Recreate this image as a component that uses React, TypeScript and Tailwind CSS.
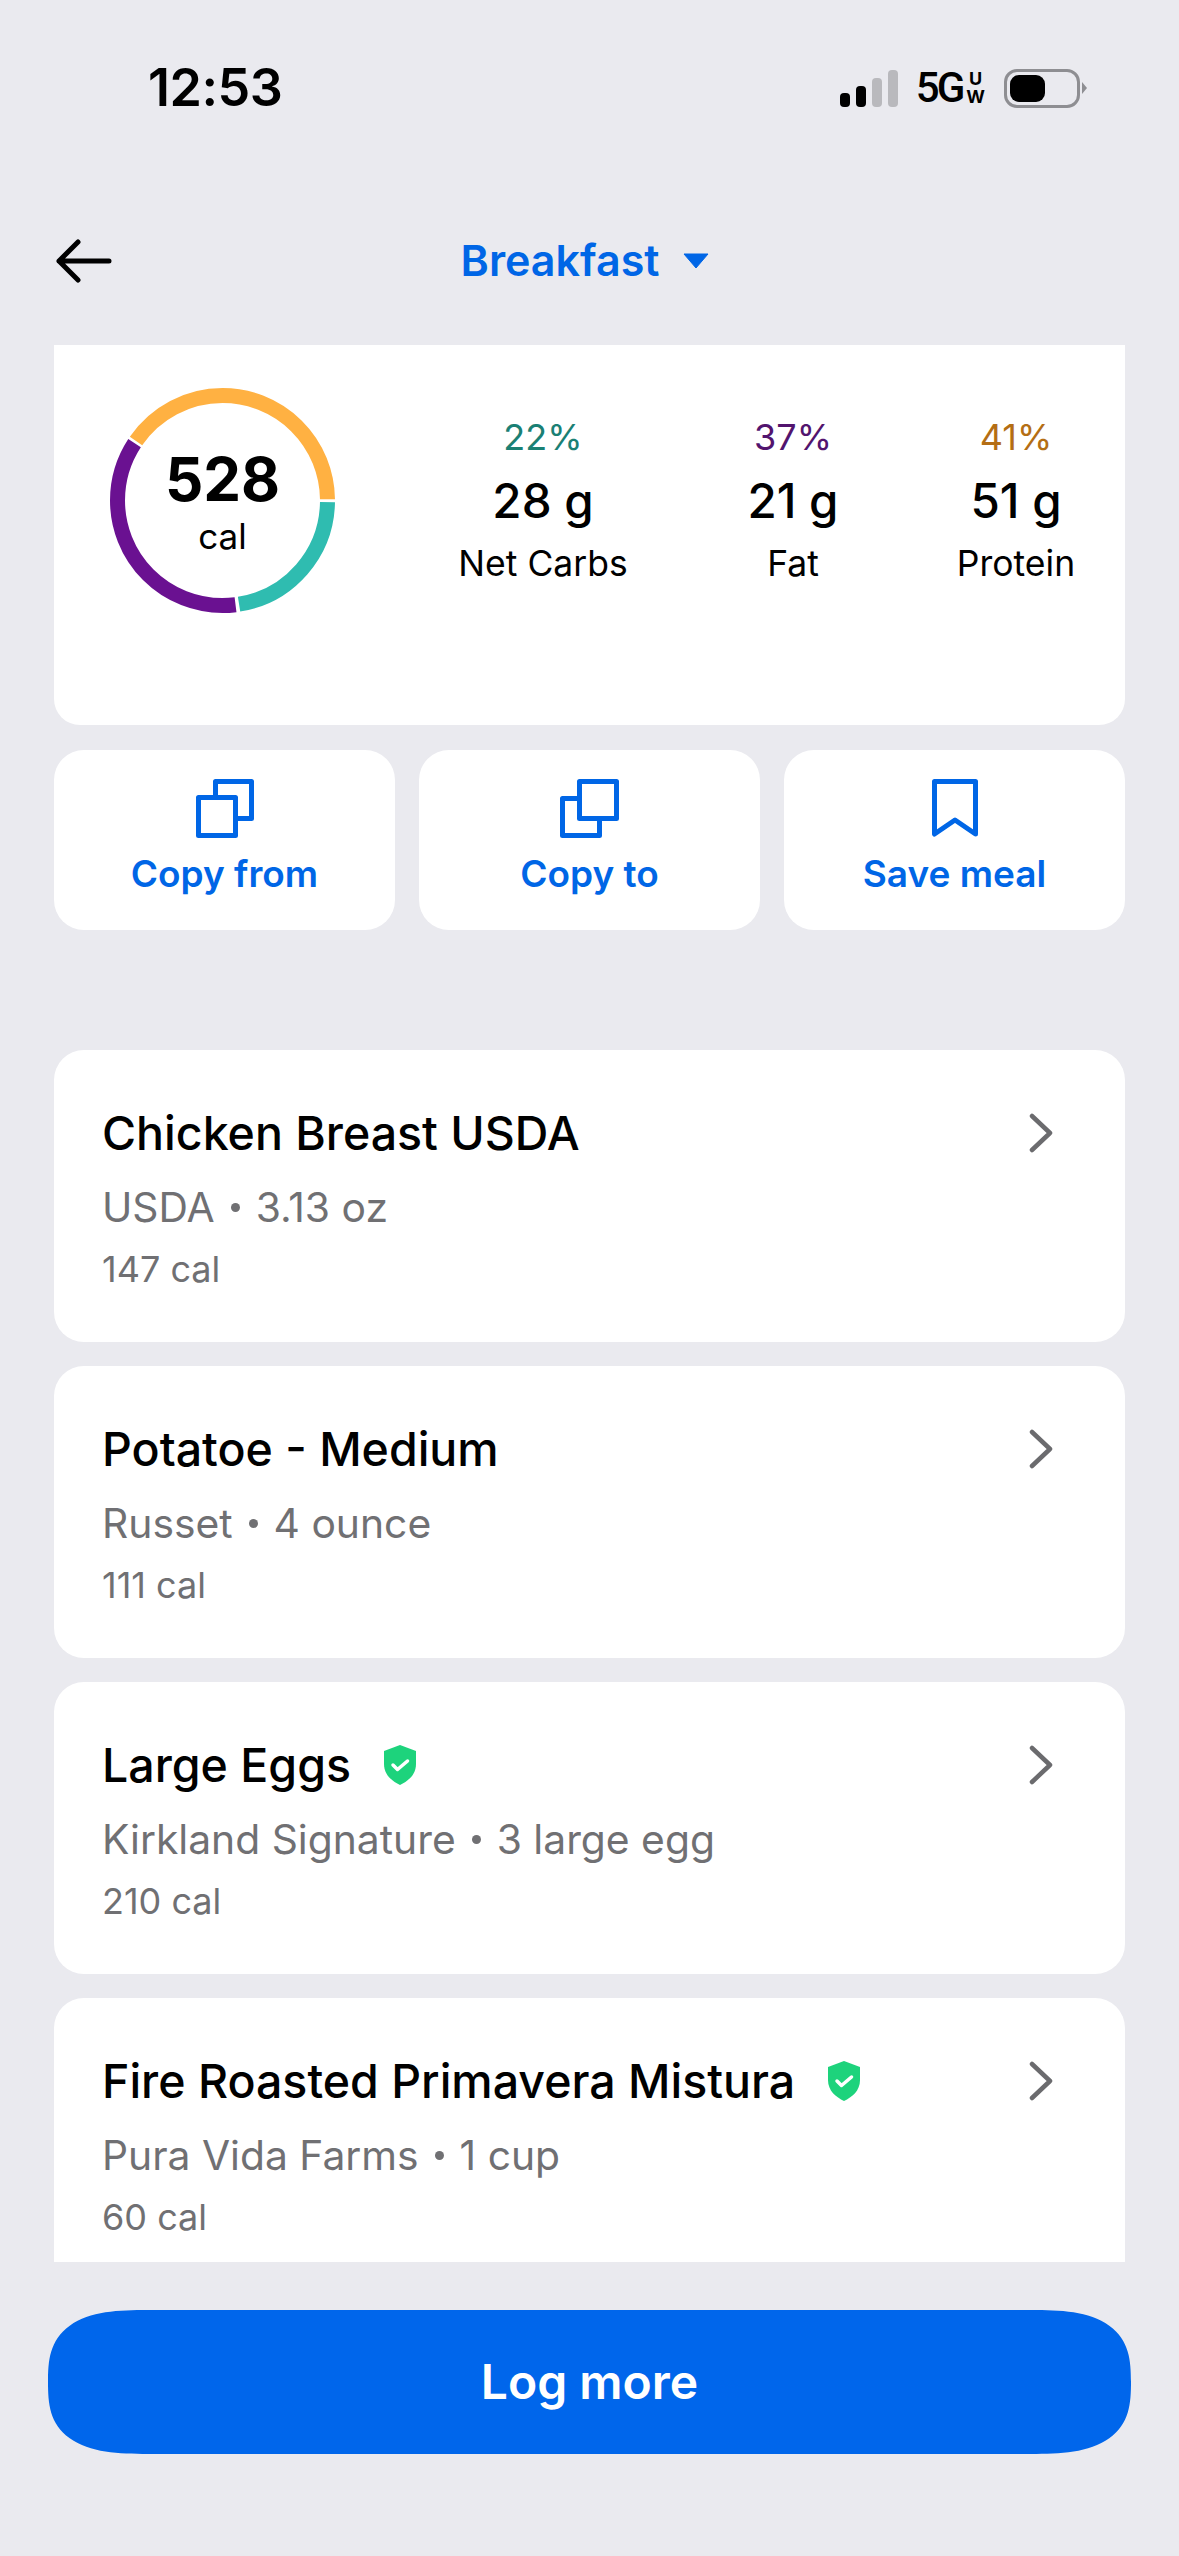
import React from 'react'

const BLUE = '#0066e6'

const foods = [
  { name: 'Chicken Breast USDA', sub: 'USDA', amount: '3.13 oz', cal: '147 cal' },
  { name: 'Potatoe - Medium', sub: 'Russet', amount: '4 ounce', cal: '111 cal' },
  { name: 'Large Eggs', sub: 'Kirkland Signature', amount: '3 large egg', cal: '210 cal', verified: true },
  { name: 'Fire Roasted Primavera Mistura', sub: 'Pura Vida Farms', amount: '1 cup', cal: '60 cal', verified: true },
]

const macros = [
  { pct: '22%', color: 'text-[#1a8074]', value: '28 g', label: 'Net Carbs', pos: 'w-[200px]' },
  { pct: '37%', color: 'text-[#52146e]', value: '21 g', label: 'Fat', pos: 'w-[150px] ml-[75px]' },
  { pct: '41%', color: 'text-[#b46e14]', value: '51 g', label: 'Protein', pos: 'w-[170px] ml-[63px]' },
]

function StatusBar() {
  return (
    <div className="flex h-[176px] items-center justify-between pl-[148px] pr-[92px]">
      <span className="text-[52px] font-semibold leading-none tracking-[-0.5px] text-black">12:53</span>
      <div className="flex items-center">
        <svg width="58" height="38" viewBox="0 0 58 38">
          <rect x="0" y="24" width="10" height="14" rx="4" fill="#000" />
          <rect x="16" y="17" width="10" height="21" rx="4" fill="#000" />
          <rect x="32" y="9" width="10" height="29" rx="4" fill="#b9b9bd" />
          <rect x="48" y="1" width="10" height="37" rx="4" fill="#b9b9bd" />
        </svg>
        <span className="ml-[18px] font-['Roboto',sans-serif] text-[42px] font-medium leading-none tracking-[-3px] text-black">5G</span>
        <div className="ml-[4px] flex flex-col items-center text-[18px] font-bold leading-[18px] text-black">
          <span>U</span>
          <span>W</span>
        </div>
        <div className="ml-[19px] flex h-[39px] w-[76px] items-center rounded-[13px] border-[3px] border-[#8e8e92] px-[3px]">
          <div className="h-[27px] w-[35px] rounded-[9px] bg-black" />
        </div>
        <svg className="ml-[2px]" width="5" height="12" viewBox="0 0 5 12">
          <path d="M0 0L5 6L0 12Z" fill="#8e8e92" />
        </svg>
      </div>
    </div>
  )
}

function NavHeader() {
  return (
    <div className="relative flex h-[169px] items-center justify-center">
      <svg className="absolute left-[56px] top-[63px]" width="56" height="44" viewBox="0 0 56 44" fill="none" stroke="#000" strokeWidth="5" strokeLinecap="round" strokeLinejoin="round">
        <path d="M3 22H53M22 3L3 22L22 41" />
      </svg>
      <span className="ml-[-9px] text-[43px] font-semibold leading-none" style={{ color: BLUE }}>Breakfast</span>
      <svg className="ml-[24px]" width="26" height="16" viewBox="0 0 26 16">
        <path d="M1 1H25L13 15Z" fill={BLUE} stroke={BLUE} strokeLinejoin="round" strokeWidth="1" />
      </svg>
    </div>
  )
}

function MacroRing() {
  return (
    <div className="relative h-[225px] w-[225px] shrink-0">
      <svg width="225" height="225" viewBox="0 0 225 225" fill="none" strokeWidth="15">
        <circle cx="112.5" cy="112.5" r="105" pathLength={100} stroke="#2fbcb0" strokeDasharray="22.2 100" strokeDashoffset="-0.27" />
        <circle cx="112.5" cy="112.5" r="105" pathLength={100} stroke="#6a1191" strokeDasharray="36.2 100" strokeDashoffset="-23" />
        <circle cx="112.5" cy="112.5" r="105" pathLength={100} stroke="#ffb142" strokeDasharray="40.2 100" strokeDashoffset="-59.6" />
      </svg>
      <div className="absolute inset-0 flex flex-col items-center justify-center">
        <span className="text-[60px] font-bold leading-[70px] text-black">528</span>
        <span className="text-[35px] leading-[44px] text-black">cal</span>
      </div>
    </div>
  )
}

function SummaryCard() {
  return (
    <div className="flex h-[380px] shrink-0 items-start rounded-b-[26px] bg-white pl-[56px] pt-[43px]">
      <MacroRing />
      <div className="ml-[108px] flex pt-[16px]">
        {macros.map((m) => (
          <div key={m.label} className={`flex flex-col items-center whitespace-nowrap ${m.pos}`}>
            <span className={`text-[36px] leading-[66px] ${m.color}`}>{m.pct}</span>
            <span className="text-[47.5px] font-[450] leading-[62px] text-black">{m.value}</span>
            <span className="text-[35.5px] leading-[64px] text-black">{m.label}</span>
          </div>
        ))}
      </div>
    </div>
  )
}

function CopyFromIcon() {
  return (
    <svg width="58" height="59" viewBox="0 0 58 59" fill="none" stroke={BLUE} strokeWidth="5" strokeLinejoin="round">
      <path d="M19.5 16V2.5H55.5V39.5H42" />
      <rect x="2.5" y="18.5" width="37" height="38" />
    </svg>
  )
}

function CopyToIcon() {
  return (
    <svg width="59" height="59" viewBox="0 0 59 59" fill="none" stroke={BLUE} strokeWidth="5" strokeLinejoin="round">
      <path d="M17 19.5H2.5V56.5H39.5V42" />
      <rect x="19.5" y="2.5" width="37" height="37" />
    </svg>
  )
}

function SaveIcon() {
  return (
    <svg width="46" height="59" viewBox="0 0 46 59" fill="none" stroke={BLUE} strokeWidth="5" strokeLinejoin="round">
      <path d="M2.5 2.5H43.5V55L23 41L2.5 55Z" />
    </svg>
  )
}

function ActionButton({ icon, label }: { icon: React.ReactNode; label: string }) {
  return (
    <div className="flex h-[180px] flex-col items-center rounded-[30px] bg-white pt-[29px]">
      <div className="flex h-[59px] items-center">{icon}</div>
      <span className="mt-[14px] text-[37px] font-semibold leading-[44px]" style={{ color: BLUE }}>{label}</span>
    </div>
  )
}

function VerifiedBadge() {
  return (
    <svg className="ml-[33px]" width="32" height="40" viewBox="0 0 32 40">
      <path d="M16 0L32 6V19C32 30 24 36 16 40C8 36 0 30 0 19V6Z" fill="#1dd37c" />
      <path d="M9 20L13.5 24.5L23.5 16" fill="none" stroke="#fff" strokeWidth="3.5" strokeLinecap="round" strokeLinejoin="round" />
    </svg>
  )
}

function FoodCard({ food }: { food: (typeof foods)[number] }) {
  return (
    <div className="flex h-[292px] shrink-0 flex-col rounded-[30px] bg-white pl-[48px] pr-[72px] pt-[54px]">
      <div className="flex h-[58px] items-center">
        <span className="text-[46.5px] font-medium leading-[58px] text-black">{food.name}</span>
        {food.verified && <VerifiedBadge />}
        <svg className="ml-auto" width="24" height="40" viewBox="0 0 24 40" fill="none" stroke="#6b6b6e" strokeWidth="4.5" strokeLinecap="round" strokeLinejoin="round">
          <path d="M3 3L21 20L3 37" />
        </svg>
      </div>
      <div className="mt-[20px] flex items-center text-[40.8px] leading-[50px] text-[#707073]">
        <span>{food.sub}</span>
        <span className="mx-[16px] h-[9px] w-[9px] rounded-full bg-[#707073]" />
        <span>{food.amount}</span>
      </div>
      <span className="mt-[15px] text-[36px] leading-[44px] text-[#707073]">{food.cal}</span>
    </div>
  )
}

export default function App() {
  return (
    <div className="flex h-[2556px] w-[1179px] flex-col overflow-hidden bg-[#eaeaef] font-['Inter',sans-serif]">
      <StatusBar />
      <NavHeader />

      {/* Scroll area */}
      <div className="mx-[54px] flex h-[1917px] shrink-0 flex-col overflow-hidden">
        <SummaryCard />
        <div className="mt-[25px] grid shrink-0 grid-cols-3 gap-[24px]">
          <ActionButton icon={<CopyFromIcon />} label="Copy from" />
          <ActionButton icon={<CopyToIcon />} label="Copy to" />
          <ActionButton icon={<SaveIcon />} label="Save meal" />
        </div>
        <div className="mt-[120px] flex flex-col gap-[24px]">
          {foods.map((f) => (
            <FoodCard key={f.name} food={f} />
          ))}
        </div>
      </div>

      <div className="mx-[48px] mt-[48px] flex h-[144px] shrink-0 items-center justify-center rounded-[100px/72px] bg-[#0066eb] [corner-shape:superellipse(1.5)]">
        <span className="text-[48px] font-semibold leading-none text-white">Log more</span>
      </div>
    </div>
  )
}
